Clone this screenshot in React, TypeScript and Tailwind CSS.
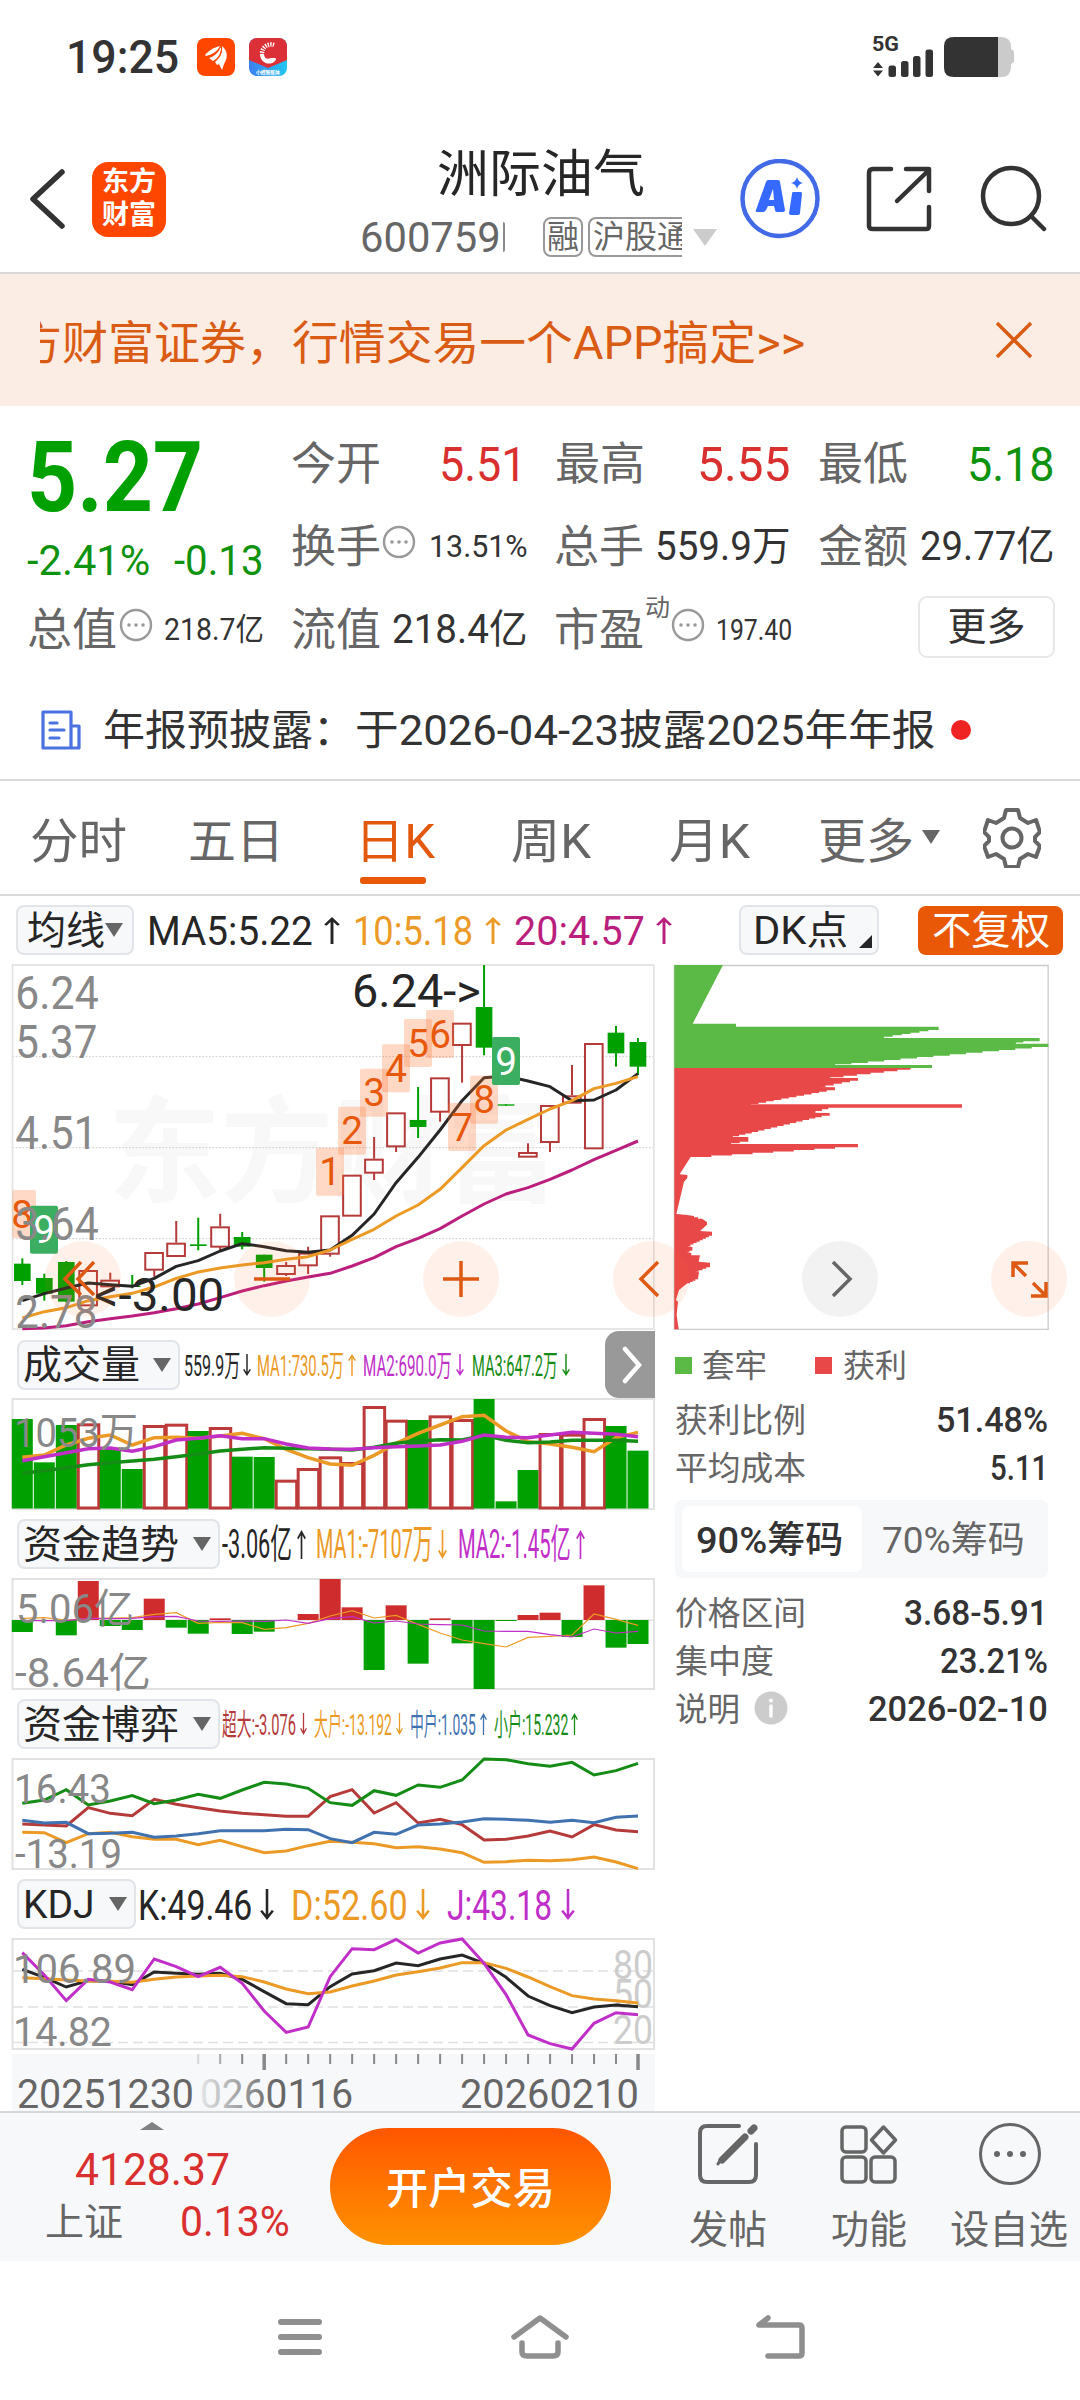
import React, { useLayoutEffect, useRef, useState } from 'react';

/* Single-line text squeezed or stretched to the width of its box. */
function Fit({ className = '', children }: { className?: string; children: React.ReactNode }) {
  const box = useRef<HTMLSpanElement>(null);
  const text = useRef<HTMLSpanElement>(null);
  const [scale, setScale] = useState(1);
  useLayoutEffect(() => {
    if (box.current && text.current) {
      setScale(box.current.clientWidth / text.current.offsetWidth);
    }
  }, []);
  return (
    <span ref={box} className={'flex shrink-0 items-center leading-none ' + className}>
      <span
        ref={text}
        className="relative top-[0.035em] inline-block origin-left whitespace-nowrap"
        style={{ transform: `scaleX(${scale})` }}
      >
        {children}
      </span>
    </span>
  );
}

const GREEN = '#00a000';
const RED = '#b53a3a';
const ORANGE = '#eb9a26';
const MAGENTA = '#bb1f7d';
const PURPLE = '#c02fc8';
const BLUE = '#3f72ae';
const DARK = '#262626';

const step = 21.99;
const dayX = (i: number) => 22.3 + step * i;

function Arrow({ up, className = '' }: { up?: boolean; className?: string }) {
  return (
    <svg viewBox="0 0 12 30" preserveAspectRatio="none" fill="none" stroke="currentColor" strokeWidth="2.2" className={'shrink-0 ' + className}>
      {up ? <path d="M6 30V2M1 9l5-7 5 7" /> : <path d="M6 0v28M1 21l5 7 5-7" />}
    </svg>
  );
}

function Caret({ className = '' }: { className?: string }) {
  return (
    <svg viewBox="0 0 18 14" className={'h-[14px] w-[18px] shrink-0 ' + className}>
      <path d="M0 0h18L9 14z" fill="currentColor" />
    </svg>
  );
}

function Dots({ className = '' }: { className?: string }) {
  return (
    <svg viewBox="0 0 34 34" className={'h-[34px] w-[34px] shrink-0 ' + className}>
      <circle cx="17" cy="17" r="15" fill="none" stroke="#999" strokeWidth="2.4" />
      <circle cx="10" cy="17" r="1.8" fill="#999" />
      <circle cx="17" cy="17" r="1.8" fill="#999" />
      <circle cx="24" cy="17" r="1.8" fill="#999" />
    </svg>
  );
}

function StatusBar() {
  return (
    <div className="flex h-[114px] items-center pl-[66px] text-[#333]">
      <Fit className="w-[113px] -translate-y-[2px] text-[47px] font-medium">19:25</Fit>
      <svg viewBox="0 0 38 38" className="ml-[18px] h-[38px] w-[38px]">
        <rect width="38" height="38" rx="8" fill="#ff4600" />
        <path d="M8 17C12 12 18 9 23 8c-2 5-8 9-14 10z" fill="#fff" />
        <path d="M12 20c6-2 10-6 12-12 1 6-2 12-8 15z" fill="#fff" />
        <path d="M18 24c5-4 8-9 7-16 6 5 6 12 2 18l-2 6-3-6-2 1z" fill="#fff" />
        <path d="M10 18.500c6-1.500 11-5 14-10.500M17 23.500c5-3.500 8-9 7.500-15" stroke="#ff4600" strokeWidth="1" fill="none" />
      </svg>
      <svg viewBox="0 0 38 38" className="ml-[14px] h-[38px] w-[38px]">
        <defs>
          <clipPath id="appClip"><rect width="38" height="38" rx="8" /></clipPath>
          <linearGradient id="appBlue" x1="0" x2="1"><stop offset="0" stopColor="#3d7ff0" /><stop offset="1" stopColor="#22c7f0" /></linearGradient>
        </defs>
        <g clipPath="url(#appClip)">
          <rect width="38" height="38" fill="url(#appBlue)" />
          <path d="M0 0h38v22L19 30 0 22z" fill="#dc3038" />
          <path d="M25 7a9 9 0 0 0-12 9" fill="none" stroke="#fff" strokeWidth="4.500" strokeDasharray="1.3 1.2" />
          <path d="M11 16h4c0 4 3 6 7 4h4c2 1 1 2-1 4-6 4-14 0-14-8z" fill="#fff" />
        </g>
        <text x="7" y="35.500" fontSize="5" fontWeight="700" fill="#fff" textLength="24">小蝶智能体</text>
      </svg>
      <svg viewBox="0 0 144 44" className="ml-[585px] h-[44px] w-[144px]">
        <text x="0" y="16" fontSize="21" fontWeight="700" fill="#333" textLength="27" lengthAdjust="spacingAndGlyphs">5G</text>
        <path d="M1 33l5-6 5 6zM1 35.500l5 6 5-6z" fill="#333" />
        <rect x="16.500" y="30.500" width="7.500" height="11.500" rx="2.500" fill="#333" />
        <rect x="29" y="26" width="7.500" height="16" rx="2.500" fill="#333" />
        <rect x="41" y="21" width="7.500" height="21" rx="2.500" fill="#333" />
        <rect x="53.500" y="14.500" width="7.500" height="27.500" rx="2.500" fill="#333" />
        <path d="M126 2h3q10 0 10 10v2l3 2v11l-3 2v3q0 10-10 10h-3z" fill="#cbcbcb" />
        <path d="M126 2H82Q72 2 72 11v22q0 9 10 9h44z" fill="#333" />
      </svg>
    </div>
  );
}

function Header() {
  return (
    <div className="flex h-[160px] items-center border-b-2 border-[#d9d9d9] pl-[29px] pt-[12px]">
      <svg viewBox="0 0 38 62" className="h-[62px] w-[38px]">
        <path d="M33 4L4 31l29 27" fill="none" stroke="#333" strokeWidth="5.500" strokeLinecap="round" strokeLinejoin="round" />
      </svg>
      <div className="ml-[25px] flex h-[75px] w-[74px] flex-col items-center justify-center gap-[6px] rounded-[16px] bg-[#ff4600] text-[27px] font-bold leading-[27px] text-white">
        <div className="h-[27px]">东方</div>
        <div className="h-[27px]">财富</div>
      </div>
      <div className="ml-[194px] flex h-[148px] w-[359px] flex-col">
        <Fit className="mt-[19px] ml-[77px] h-[58px] w-[208px] text-[51px] text-[#262626]">洲际油气</Fit>
        <div className="mt-[7px] flex h-[56px] items-center text-[#666]">
          <Fit className="w-[141px] text-[42px]">600759</Fit>
          <div className="ml-[2px] h-[30px] w-[2px] rounded-r-full bg-[#8a8a8a]" />
          <div className="ml-[38px] flex h-[40px] w-[40px] items-center justify-center rounded-[8px] border-2 border-[#999] text-[32px] leading-none">融</div>
          <div className="ml-[5px] flex h-[40px] w-[94px] items-center overflow-hidden rounded-l-[8px] border-2 border-r-0 border-[#999] pl-[3px] leading-none">
            <span className="whitespace-nowrap text-[32px]">沪股通</span>
          </div>
          <svg viewBox="0 0 24 17" className="ml-[11px] h-[17px] w-[24px]"><path d="M0 0h24L12 17z" fill="#ccc" /></svg>
        </div>
      </div>
      <svg viewBox="0 0 80 80" className="ml-[21px] h-[80px] w-[80px]">
        <circle cx="40" cy="39.500" r="37.500" fill="none" stroke="#426ae6" strokeWidth="4.500" />
        <path d="M28 21h10q2 0 2 2l5 28q0 2-2 2h-6q-2 0-2-2l-1-4h-6l-2 4q-1 2-3 2h-6q-2 0-1-2l10-28q1-2 2-2zM33 30l-4 11h5z" fill="#3669ff" fillRule="evenodd" />
        <path d="M53 33h8q1 0 1 2l-2 19q0 2-2 2h-7q-2 0-2-2l3-19q0-2 1-2zM57 18q1 5 6 6-5 1-6 6-1-5-6-6 5-1 6-6z" fill="#3669ff" />
      </svg>
      <svg viewBox="0 0 66 66" fill="none" stroke="#333" strokeWidth="4.500" strokeLinecap="round" strokeLinejoin="round" className="ml-[46px] h-[66px] w-[66px]">
        <path d="M25 3H7Q3 3 3 7v53q0 3 4 3h53q3 0 3-3V41M40 3h23v22M62 5L31 35" />
      </svg>
      <svg viewBox="0 0 68 68" fill="none" stroke="#333" strokeWidth="4.500" strokeLinecap="round" className="ml-[47px] h-[68px] w-[68px]">
        <circle cx="32" cy="31" r="28" />
        <path d="M52 51l13 13" />
      </svg>
    </div>
  );
}

function Banner() {
  return (
    <div className="flex h-[132px] items-center bg-[#fcede4] pl-[40px] text-[#da5c14]">
      <div className="flex h-[60px] w-[765px] translate-y-[1px] items-center justify-end overflow-hidden">
        <Fit className="w-[276px] text-[46px]">方财富证券，</Fit>
        <Fit className="w-[513px] text-[46px]">行情交易一个APP搞定&gt;&gt;</Fit>
      </div>
      <svg viewBox="0 0 36 36" fill="none" stroke="currentColor" strokeWidth="3.500" className="ml-[191px] h-[36px] w-[36px]">
        <path d="M1 1l34 34M35 1L1 35" />
      </svg>
    </div>
  );
}

function Quote() {
  const label = 'w-[90px] text-[45px] text-[#666]';
  return (
    <div className="h-[264px] pt-[15px]">
      <div className="flex h-[166px] pl-[27px] text-[#00a000]">
        <div className="w-[264px]">
          <Fit className="mb-[8px] h-[106px] w-[176px] text-[99px] font-bold">5.27</Fit>
          <div className="flex h-[50px] items-center text-[#0f930f]">
            <Fit className="w-[123px] text-[42px]">-2.41%</Fit>
            <Fit className="ml-[24px] w-[90px] text-[42px]">-0.13</Fit>
          </div>
        </div>
        <div>
          <div className="flex h-[83px] items-center">
            <Fit className={label}>今开</Fit>
            <Fit className="ml-[58px] w-[88px] text-[49px] text-[#d9302f]">5.51</Fit>
            <Fit className={label + ' ml-[28px]'}>最高</Fit>
            <Fit className="ml-[52px] w-[94px] text-[49px] text-[#d9302f]">5.55</Fit>
            <Fit className={label + ' ml-[27px]'}>最低</Fit>
            <Fit className="ml-[59px] w-[88px] text-[49px] text-[#0f930f]">5.18</Fit>
          </div>
          <div className="flex h-[83px] items-center text-[#333]">
            <Fit className={label}>换手</Fit>
            <Dots className="ml-[1px] translate-y-[-4px]" />
            <Fit className="ml-[13px] w-[99px] text-[31px]">13.51%</Fit>
            <Fit className={label + ' ml-[26px]'}>总手</Fit>
            <Fit className="ml-[11px] w-[135px] text-[40px]">559.9万</Fit>
            <Fit className={label + ' ml-[28px]'}>金额</Fit>
            <Fit className="ml-[12px] w-[134px] text-[40px]">29.77亿</Fit>
          </div>
        </div>
      </div>
      <div className="flex h-[83px] items-center pl-[27px] text-[#333]">
        <Fit className={label}>总值</Fit>
        <Dots className="ml-[2px] translate-y-[-4px]" />
        <Fit className="ml-[11px] w-[100px] text-[31px]">218.7亿</Fit>
        <Fit className={label + ' ml-[27px]'}>流值</Fit>
        <Fit className="ml-[11px] w-[135px] text-[40px]">218.4亿</Fit>
        <Fit className={label + ' ml-[27px]'}>市盈</Fit>
        <Fit className="ml-[1px] w-[25px] -translate-y-[21px] text-[24px] text-[#666]">动</Fit>
        <Dots className="ml-[1px] translate-y-[-4px]" />
        <Fit className="ml-[11px] w-[76px] text-[30px]">197.40</Fit>
        <div className="ml-[126px] flex h-[62px] w-[137px] -translate-y-[2px] items-center justify-center rounded-[9px] border-2 border-[#e8e8e8]">
          <Fit className="w-[78px] text-[39px]">更多</Fit>
        </div>
      </div>
    </div>
  );
}

function Notice() {
  return (
    <div className="flex h-[111px] items-center border-b-2 border-[#d9d9d9] pl-[41px] pt-[10px] text-[#333]">
      <svg viewBox="0 0 40 40" fill="none" stroke="#4a72e0" strokeWidth="3.200" strokeLinejoin="round" strokeLinecap="round" className="h-[40px] w-[40px]">
        <path d="M30 38H2V2h28zM30 16h8v22h-8M9 13h7M9 20h14M9 28h9" />
      </svg>
      <Fit className="ml-[22px] w-[252px] text-[42px]">年报预披露：</Fit>
      <Fit className="w-[580px] text-[42px]">于2026-04-23披露2025年年报</Fit>
      <div className="ml-[16px] h-[20px] w-[20px] rounded-full bg-[#f02323]" />
    </div>
  );
}

function Tabs() {
  return (
    <div className="flex h-[115px] items-center border-b-2 border-[#d9d9d9] pl-[30px] pt-[5px] text-[48px] text-[#666]">
      <Fit className="w-[97px]">分时</Fit>
      <Fit className="ml-[61px] w-[96px]">五日</Fit>
      <div className="relative ml-[71px] text-[#e2580d]">
        <Fit className="h-[80px] w-[80px]">日K</Fit>
        <div className="absolute left-[5px] top-[77px] h-[7px] w-[66px] rounded-[3px] bg-[#e85806]" />
      </div>
      <Fit className="ml-[76px] w-[80px]">周K</Fit>
      <Fit className="ml-[78px] w-[81px]">月K</Fit>
      <Fit className="ml-[68px] w-[96px]">更多</Fit>
      <Caret className="ml-[8px] -translate-y-[3px]" />
      <svg viewBox="0 0 58 60" fill="none" stroke="#666" strokeWidth="4" strokeLinejoin="round" className="ml-[43px] h-[60px] w-[58px] -translate-y-[2px]">
        <path d="M23 2h12l2 8 8 5 8-3 4 12-5 5v4l5 5-4 11-8-3-8 5-2 8H23l-2-8-8-5-8 3-4-11 5-5v-4l-5-5 4-12 8 3 8-5z" />
        <circle cx="29" cy="30" r="9.500" />
      </svg>
    </div>
  );
}

function AverageRow() {
  return (
    <div className="flex h-[64px] items-center pl-[16px] pt-[4px] text-[#262626]">
      <div className="flex h-[50px] w-[118px] items-center rounded-[8px] border-2 border-[#e1e4e8] bg-[#f7f8fa] pl-[9px]">
        <Fit className="w-[78px] text-[39px]">均线</Fit>
        <Caret className="text-[#666]" />
      </div>
      <Fit className="ml-[13px] w-[166px] text-[41px]">MA5:5.22</Fit>
      <Arrow up className="ml-[11px] h-[27px] w-[16px]" />
      <div className="ml-[13px] flex items-center text-[#eb9a26]">
        <Fit className="w-[120px] text-[41px]">10:5.18</Fit>
        <Arrow up className="ml-[12px] h-[27px] w-[16px]" />
      </div>
      <div className="ml-[13px] flex items-center text-[#bb1f7d]">
        <Fit className="w-[131px] text-[41px]">20:4.57</Fit>
        <Arrow up className="ml-[11px] h-[27px] w-[16px]" />
      </div>
      <div className="ml-[67px] flex h-[50px] w-[140px] items-center rounded-[8px] border-2 border-[#e1e4e8] bg-[#f7f8fa] pl-[12px]">
        <Fit className="w-[95px] text-[39px]">DK点</Fit>
        <svg viewBox="0 0 13 13" className="ml-[11px] mt-[22px] h-[13px] w-[13px]"><path d="M13 0v13H0z" fill="#262626" /></svg>
      </div>
      <div className="ml-[39px] flex h-[49px] w-[145px] items-center justify-center rounded-[8px] bg-[#e85806] text-white">
        <Fit className="w-[118px] text-[39px]">不复权</Fit>
      </div>
    </div>
  );
}

/* Candles: body top, body bottom, wick top, wick bottom, rising. Three units per pixel. */
const candles: [number, number, number, number, number][] = [
  [941, 993, 925, 1005, 0], [984, 1031, 971, 1052, 0], [936, 1055, 933, 1057, 0], [960, 1067, 960, 1067, 1],
  [989, 1010, 968, 1010, 1], [1007, 1011, 975, 1015, 0], [906, 960, 906, 980, 1], [878, 919, 813, 919, 1],
  [883, 888, 803, 901, 0], [829, 891, 791, 900, 1], [861, 890, 846, 898, 0], [914, 954, 914, 995, 0],
  [945, 973, 936, 978, 1], [908, 947, 890, 972, 1], [796, 912, 796, 920, 1], [674, 798, 674, 798, 1],
  [626, 669, 561, 690, 1], [487, 590, 487, 606, 1], [510, 531, 411, 564, 0], [382, 486, 382, 515, 1],
  [218, 286, 218, 398, 1], [171, 293, 45, 316, 0], [463, 467, 463, 467, 0], [606, 621, 580, 621, 1],
  [465, 577, 465, 606, 1], [436, 459, 345, 459, 1], [279, 596, 279, 596, 1], [248, 310, 228, 350, 0], [276, 350, 264, 375, 0],
];
const ma5 = [1052, 1031, 1014, 999, 1004, 1009, 985, 949, 932, 903, 881, 890, 902, 907, 900, 856, 792, 698, 622, 540, 452, 383, 378, 393, 410, 452, 450, 420, 371];
const ma10 = [1104, 1085, 1073, 1052, 1040, 1030, 1011, 985, 966, 954, 945, 938, 928, 920, 900, 868, 838, 798, 765, 718, 653, 587, 540, 508, 477, 452, 416, 400, 380];
const ma20 = [1136, 1134, 1127, 1115, 1106, 1098, 1088, 1076, 1062, 1043, 1023, 1007, 993, 981, 970, 948, 923, 890, 865, 836, 798, 762, 732, 713, 688, 660, 629, 601, 573];

const X3 = (i: number) => 67 + 65.96 * i;
const line3 = (v: number[]) => v.map((y, i) => `${X3(i)},${y}`).join(' ');

function Badge({ x, y, n, solid, left = 0 }: { x: number; y: number; n: string; solid?: boolean; left?: number }) {
  return (
    <g>
      <rect x={x + left} y={y} width={84 - left} height="144" rx="6" fill={solid ? '#3cae62' : '#ff7834'} fillOpacity={solid ? 1 : 0.28} />
      <text x={x + 42} y={y + 113} fontSize="116" fill={solid ? '#fff' : '#e8580c'} textAnchor="middle">{n}</text>
    </g>
  );
}

function PriceChart() {
  return (
    <svg viewBox="0 30 1980 1125" className="h-[375px] w-[660px] shrink-0">
      <text x="325" y="730" fontSize="345" fontWeight="700" fill="#f8f8f8" textLength="1350" lengthAdjust="spacingAndGlyphs">东方财富</text>
      <path d="M37 320H1962M37 593H1962M37 866H1962" stroke="#c9c9c9" strokeWidth="3" strokeDasharray="5 5" />
      <rect x="37.500" y="45" width="1924" height="1092" fill="none" stroke="#e2e2e2" strokeWidth="5" />
      {candles.map(([t, b, h, l, up], i) => (
        <g key={i} stroke={up ? RED : GREEN} strokeWidth="6" fill={up ? '#fff' : GREEN}>
          <path d={up ? `M${X3(i)} ${h}V${t}M${X3(i)} ${b}V${l}` : `M${X3(i)} ${h}V${l}`} />
          {up ? <rect x={X3(i) - 27} y={t + 3} width="53" height={Math.max(b - t - 4, 5)} /> : <rect x={X3(i) - 25} y={t} width="50" height={b - t} stroke="none" />}
        </g>
      ))}
      <g fill="none" strokeWidth="9" strokeLinejoin="round">
        <polyline points={line3(ma5)} stroke={DARK} />
        <polyline points={line3(ma10)} stroke={ORANGE} />
        <polyline points={line3(ma20)} stroke={MAGENTA} />
      </g>
      <Badge x={24} y={720} n="8" left={13} />
      <Badge x={90} y={767} n="9" solid />
      <Badge x={948} y={593} n="1" />
      <Badge x={1014} y={470} n="2" />
      <Badge x={1080} y={356} n="3" />
      <Badge x={1146} y={283} n="4" />
      <Badge x={1212} y={207} n="5" />
      <Badge x={1278} y={180} n="6" />
      <Badge x={1344} y={459} n="7" />
      <Badge x={1410} y={377} n="8" />
      <Badge x={1476} y={261} n="9" solid />
      <g fontSize="136" fill="#888">
        <text x="46" y="176" textLength="250" lengthAdjust="spacingAndGlyphs">6.24</text>
        <text x="46" y="325" textLength="246" lengthAdjust="spacingAndGlyphs">5.37</text>
        <text x="46" y="598" textLength="246" lengthAdjust="spacingAndGlyphs">4.51</text>
        <text x="46" y="871" textLength="250" lengthAdjust="spacingAndGlyphs">3.64</text>
        <text x="46" y="1133" textLength="246" lengthAdjust="spacingAndGlyphs">2.78</text>
      </g>
      <g fontSize="136" fill={DARK}>
        <text x="1056" y="170" textLength="386" lengthAdjust="spacingAndGlyphs">6.24-&gt;</text>
        <text x="283" y="1084" textLength="390" lengthAdjust="spacingAndGlyphs">&lt;-3.00</text>
      </g>
    </svg>
  );
}

/* Outline anchors as [y, x]; slopes are drawn as thin horizontal steps. */
const trapped: [number, number][] = [[45, 189], [221, 98], [221, 228], [230, 228], [230, 836], [240, 836], [240, 805], [264, 645], [264, 1139], [274, 1139], [274, 1090], [281, 1045], [281, 1165], [291, 1165], [291, 1115], [343, 525], [345, 525], [345, 816], [354, 816]];
const profit: [number, number][] = [[354, 753], [359, 750], [359, 712], [382, 510], [384, 510], [384, 594], [392, 594], [392, 570], [411, 472], [412, 525], [421, 525], [421, 500], [462, 273], [463, 273], [463, 906], [473, 906], [473, 505], [488, 447], [489, 509], [497, 509], [497, 485], [559, 218], [561, 218], [561, 265], [570, 265], [580, 213], [582, 213], [582, 594], [592, 594], [592, 525], [621, 92], [673, 59], [675, 82], [684, 82], [695, 72], [792, 49], [794, 75], [798, 102], [806, 126], [816, 141], [824, 141], [843, 120], [845, 156], [853, 156], [888, 82], [891, 97], [899, 97], [906, 80], [909, 94], [916, 94], [916, 120], [935, 116], [938, 150], [947, 150], [965, 105], [967, 117], [984, 114], [1000, 82], [1020, 57], [1050, 48], [1055, 54], [1095, 50], [1138, 56]];

function steppedPath(a: [number, number][]) {
  let d = `M43 ${a[0][0]}H${a[0][1]}`;
  for (let k = 1; k < a.length; k++) {
    const [y0, x0] = a[k - 1];
    const [y1, x1] = a[k];
    const n = Math.max(1, Math.round((y1 - y0) / 4.3));
    const steep = Math.abs(x1 - x0) > 1.5 * (y1 - y0) && y1 - y0 > 6;
    if (!steep) {
      d += `L${x1} ${y1}`;
    } else {
      for (let s = 1; s <= n; s++) d += `V${y0 + ((y1 - y0) * s) / n}H${x0 + ((x1 - x0) * s) / n}`;
    }
  }
  return d + 'H43Z';
}

function ChipChart() {
  return (
    <svg viewBox="0 30 1260 1125" className="h-[375px] w-[420px] shrink-0">
      <path d="M43 46.500H1164.500V1138H43z" fill="none" stroke="#ccc" strokeWidth="4" />
      <path d={steppedPath(trapped)} fill="#5bb946" />
      <path d={steppedPath(profit)} fill="#e84848" />
    </svg>
  );
}

function RoundButton({ className, children }: { className: string; children: React.ReactNode }) {
  return (
    <button className={'absolute top-[281px] h-[76px] w-[76px] rounded-full ' + className}>
      <svg viewBox="0 0 76 76" fill="none" stroke="currentColor" strokeWidth="3.500" className="h-[76px] w-[76px]">{children}</svg>
    </button>
  );
}

function ChartControls() {
  const warm = 'bg-[#ff7834]/10 text-[#de5a12] ';
  return (
    <>
      <RoundButton className={warm + 'left-[45px]'}><path d="M36 21L20 38l16 16M49 21L33 38l16 16" /></RoundButton>
      <RoundButton className={warm + 'left-[234px]'}><path d="M20 38h36" /></RoundButton>
      <RoundButton className={warm + 'left-[423px]'}><path d="M20 38h36M38 20v36" /></RoundButton>
      <RoundButton className={warm + 'left-[613px]'}><path d="M45 21L28 38l17 17" /></RoundButton>
      <RoundButton className="left-[802px] bg-[#f2f2f2] text-[#666]"><path d="M31 21l17 17-17 17" /></RoundButton>
      <RoundButton className={warm + 'left-[991px]'}><path d="M37 22H22v14M22 22l13 13M55 41v14H40M55 55L42 42" /></RoundButton>
    </>
  );
}

function Selector({ className, textClass, children }: { className: string; textClass: string; children: React.ReactNode }) {
  return (
    <div className={'flex h-[50px] shrink-0 items-center justify-between rounded-[8px] border-2 border-[#e1e4e8] bg-[#f7f8fa] pl-[4px] pr-[7px] text-[#262626] ' + className}>
      <Fit className={'text-[39px] ' + textClass}>{children}</Fit>
      <Caret className="text-[#666]" />
    </div>
  );
}

function Reading({ className, textClass, up, arrowClass, children }: { className: string; textClass: string; up?: boolean; arrowClass: string; children: React.ReactNode }) {
  return (
    <div className={'flex shrink-0 items-center ' + className}>
      <Fit className={textClass}>{children}</Fit>
      <Arrow up={up} className={arrowClass} />
    </div>
  );
}

function Panel({ children }: { children: React.ReactNode }) {
  return (
    <svg viewBox="0 0 660 120" className="h-[120px] w-[660px]">
      <rect x="12.500" y="5" width="641.500" height="110" fill="none" stroke="#e2e2e2" strokeWidth="2" />
      {children}
    </svg>
  );
}

function Series({ v, color, off, width = 3.5 }: { v: number[]; color: string; off: number; width?: number }) {
  return <polyline points={v.map((y, i) => `${dayX(i)},${(y - off) / 3 + 5}`).join(' ')} fill="none" stroke={color} strokeWidth={width} />;
}

function Label({ x, y, w, color = '#888', children }: { x: number; y: number; w: number; color?: string; children: React.ReactNode }) {
  return <text x={x} y={y} fontSize="41" fill={color} textLength={w} lengthAdjust="spacingAndGlyphs">{children}</text>;
}

const volume: [number, number][] = [[267, 0], [397, 0], [285, 0], [280, 1], [360, 0], [417, 0], [285, 1], [281, 1], [303, 0], [291, 1], [380, 0], [381, 0], [449, 1], [414, 1], [379, 1], [396, 1], [228, 1], [269, 1], [270, 0], [256, 1], [267, 1], [207, 0], [514, 0], [420, 0], [309, 1], [311, 1], [264, 1], [288, 0], [362, 0]];
const volMa1 = [382, 375, 345, 325, 315, 345, 323, 322, 325, 318, 310, 326, 358, 383, 402, 406, 376, 340, 310, 285, 260, 256, 303, 335, 342, 352, 365, 323, 307];
const volMa2 = [392, 380, 368, 356, 354, 364, 350, 330, 325, 317, 326, 326, 342, 354, 357, 358, 353, 350, 348, 345, 334, 315, 322, 323, 315, 307, 310, 313, 320];
const volMa3 = [430, 422, 413, 404, 398, 393, 388, 380, 372, 363, 358, 353, 355, 356, 358, 360, 352, 340, 333, 329, 330, 316, 331, 338, 336, 331, 331, 331, 334];

const flow: number[] = [906, 873, 916, 753, 888, 900, 806, 893, 911, 865, 912, 905, 870, 852, 747, 832, 1020, 826, 1001, 865, 940, 1077, 873, 855, 848, 921, 766, 953, 942];
const flowMa1 = [865, 863, 870, 866, 864, 863, 853, 848, 880, 877, 878, 898, 893, 880, 858, 842, 864, 856, 883, 909, 930, 941, 951, 922, 919, 915, 852, 868, 886];
const flowMa2 = [872, 872, 872, 865, 866, 865, 860, 859, 873, 874, 873, 874, 870, 880, 866, 860, 879, 873, 882, 884, 885, 903, 904, 904, 914, 921, 897, 909, 904];

const gameSmall = [340, 330, 299, 345, 333, 317, 341, 330, 313, 325, 300, 277, 282, 295, 338, 346, 302, 316, 285, 292, 270, 207, 209, 221, 229, 217, 255, 242, 220];
const gameSuper = [402, 405, 408, 353, 370, 377, 328, 343, 353, 363, 370, 374, 379, 379, 320, 299, 369, 338, 399, 388, 404, 450, 448, 438, 423, 441, 404, 420, 425];
const gameMid = [391, 399, 397, 431, 430, 427, 442, 438, 431, 422, 422, 422, 418, 419, 446, 458, 427, 433, 405, 402, 396, 386, 388, 391, 397, 391, 398, 382, 378];
const gameBig = [427, 428, 458, 431, 427, 440, 448, 448, 464, 451, 470, 488, 483, 467, 454, 457, 461, 473, 470, 477, 488, 517, 515, 511, 512, 509, 501, 516, 536];

const kdjJ = [788, 855, 932, 868, 876, 899, 807, 830, 860, 832, 880, 963, 1027, 1011, 860, 776, 779, 748, 789, 759, 747, 820, 914, 1035, 1061, 1077, 1000, 968, 974];
const kdjK = [838, 862, 891, 872, 874, 884, 846, 850, 853, 850, 868, 905, 941, 944, 890, 852, 842, 819, 827, 807, 795, 820, 862, 918, 947, 968, 951, 945, 950];
const kdjD = [863, 866, 870, 873, 874, 877, 868, 861, 858, 856, 860, 876, 897, 911, 906, 888, 873, 855, 845, 834, 818, 818, 835, 861, 890, 917, 927, 932, 939];

function Indicators() {
  return (
    <div className="w-[660px] shrink-0">
      <div className="relative flex h-[59px] items-center pl-[17px]">
        <Selector className="w-[163px]" textClass="w-[117px]">成交量</Selector>
        <Reading className="ml-[4px] text-[#262626]" textClass="w-[56px] text-[30px]" arrowClass="ml-[3px] h-[22px] w-[8px]">559.9万</Reading>
        <Reading up className="ml-[6px] text-[#eb9a26]" textClass="w-[87px] text-[30px]" arrowClass="ml-[4px] h-[22px] w-[8px]">MA1:730.5万</Reading>
        <Reading className="ml-[7px] text-[#c02fc8]" textClass="w-[89px] text-[30px]" arrowClass="ml-[4px] h-[22px] w-[8px]">MA2:690.0万</Reading>
        <Reading className="ml-[8px] text-[#158c15]" textClass="w-[86px] text-[30px]" arrowClass="ml-[4px] h-[22px] w-[8px]">MA3:647.2万</Reading>
        <button className="absolute left-[605px] top-[-4px] flex h-[67px] w-[50px] items-center justify-center rounded-l-[14px] bg-[#999] pl-[3px]">
          <svg viewBox="0 0 20 38" className="h-[38px] w-[20px]"><path d="M3 3l14 16L3 35" fill="none" stroke="#fff" strokeWidth="4.500" strokeLinecap="round" /></svg>
        </button>
      </div>
      <Panel>
        {volume.map(([t, up], i) => {
          const y = (t - 207) / 3 + 5;
          return up ? (
            <rect key={i} x={dayX(i) - 10} y={y + 1.500} width="20.500" height={114 - y - 1.500} fill="#fff" stroke="#bd3a3a" strokeWidth="3" />
          ) : (
            <rect key={i} x={dayX(i) - 10.500} y={y} width="21" height={114.500 - y} fill={GREEN} />
          );
        })}
        <Series v={volMa1} color={ORANGE} off={207} />
        <Series v={volMa3} color="#158c15" off={207} />
        <Series v={volMa2} color={PURPLE} off={207} />
        <Label x={14} y={53} w={124}>1053万</Label>
      </Panel>

      <div className="flex h-[60px] items-center pl-[17px]">
        <Selector className="w-[203px]" textClass="w-[156px]">资金趋势</Selector>
        <Reading up className="ml-[2px] text-[#262626]" textClass="w-[70px] text-[40px]" arrowClass="ml-[5px] h-[29px] w-[9px]">-3.06亿</Reading>
        <Reading className="ml-[10px] text-[#eb9a26]" textClass="w-[117px] text-[40px]" arrowClass="ml-[5px] h-[29px] w-[9px]">MA1:-7107万</Reading>
        <Reading up className="ml-[11px] text-[#c02fc8]" textClass="w-[113px] text-[40px]" arrowClass="ml-[5px] h-[29px] w-[9px]">MA2:-1.45亿</Reading>
      </div>
      <Panel>
        <path d="M12 46H654" stroke="#e2e2e2" strokeWidth="1.500" />
        {flow.map((v, i) => (
          <rect key={i} x={dayX(i) - 10.500} y={(Math.min(v, 870) - 747) / 3 + 5} width="21" height={Math.abs(v - 870) / 3} fill={v > 870 ? GREEN : '#cf2d2d'} />
        ))}
        <Series v={flowMa1} color={ORANGE} off={747} width={1.2} />
        <Series v={flowMa2} color={PURPLE} off={747} width={1.2} />
        <Label x={16} y={49} w={118}>5.06亿</Label>
        <Label x={15} y={113} w={136}>-8.64亿</Label>
      </Panel>

      <div className="flex h-[60px] items-center pl-[17px]">
        <Selector className="w-[203px]" textClass="w-[156px]">资金博弈</Selector>
        <Reading className="ml-[2px] text-[#b53a3a]" textClass="w-[74px] text-[30px]" arrowClass="ml-[4px] h-[22px] w-[7px]">超大:-3.076</Reading>
        <Reading className="ml-[7px] text-[#eb9a26]" textClass="w-[78px] text-[30px]" arrowClass="ml-[4px] h-[22px] w-[7px]">大户:-13.192</Reading>
        <Reading up className="ml-[7px] text-[#3f72ae]" textClass="w-[66px] text-[30px]" arrowClass="ml-[4px] h-[22px] w-[7px]">中户:1.035</Reading>
        <Reading up className="ml-[7px] text-[#158c15]" textClass="w-[74px] text-[30px]" arrowClass="ml-[3px] h-[22px] w-[7px]">小户:15.232</Reading>
      </div>
      <Panel>
        <Series v={gameBig} color={ORANGE} off={207} width={3} />
        <Series v={gameSuper} color={RED} off={207} width={3} />
        <Series v={gameMid} color={BLUE} off={207} width={3} />
        <Series v={gameSmall} color="#158c15" off={207} width={3} />
        <Label x={14} y={49} w={97}>16.43</Label>
        <Label x={15} y={114} w={107}>-13.19</Label>
      </Panel>

      <div className="flex h-[60px] items-center pl-[17px]">
        <Selector className="w-[119px]" textClass="w-[72px]">KDJ</Selector>
        <Reading className="ml-[2px] text-[#262626]" textClass="w-[114px] text-[43px]" arrowClass="ml-[8px] h-[31px] w-[14px]">K:49.46</Reading>
        <Reading className="ml-[17px] text-[#eb9a26]" textClass="w-[117px] text-[43px]" arrowClass="ml-[8px] h-[31px] w-[14px]">D:52.60</Reading>
        <Reading className="ml-[17px] text-[#c02fc8]" textClass="w-[105px] text-[43px]" arrowClass="ml-[9px] h-[31px] w-[14px]">J:43.18</Reading>
      </div>
      <Panel>
        <path d="M13 37H654M13 73H654M13 108.500H654" stroke="#e0e0e0" strokeWidth="1.500" strokeDasharray="10 5" />
        <Label x={613} y={45} w={40} color="#ccc">80</Label>
        <Label x={613} y={74} w={40} color="#ccc">50</Label>
        <Label x={613} y={110} w={40} color="#ccc">20</Label>
        <Series v={kdjK} color={DARK} off={747} width={3} />
        <Series v={kdjD} color={ORANGE} off={747} width={3} />
        <Series v={kdjJ} color={PURPLE} off={747} width={3} />
        <Label x={13} y={49} w={123}>106.89</Label>
        <Label x={13} y={112} w={99}>14.82</Label>
      </Panel>

      <svg viewBox="0 0 660 57" className="h-[57px] w-[660px]">
        <defs>
          <linearGradient id="dateFade" x1="196" x2="275" y1="0" y2="0" gradientUnits="userSpaceOnUse">
            <stop offset="0" stopColor="#666" stopOpacity="0.080" />
            <stop offset="1" stopColor="#666" />
          </linearGradient>
        </defs>
        <rect x="12" width="643" height="57" fill="#f7f8fa" />
        {Array.from({ length: 21 }, (_, k) => k + 8).map((i) => (
          <path key={i} d={`M${dayX(i)} 0V${i === 11 || i === 28 ? 16 : 10}`} stroke="#888" strokeWidth={i === 11 || i === 28 ? 3.500 : 2} strokeOpacity={i === 8 ? 0.3 : i === 9 ? 0.7 : 1} />
        ))}
        <Label x={17} y={54} w={177} color="#666">20251230</Label>
        <Label x={200} y={54} w={153} color="url(#dateFade)">0260116</Label>
        <Label x={460} y={54} w={179} color="#666">20260210</Label>
      </svg>
    </div>
  );
}

function InfoRow({ label, valueClass, value, labelClass, children }: { label: string; valueClass: string; value: string; labelClass: string; children?: React.ReactNode }) {
  return (
    <div className="flex h-[48px] items-center text-[33px]">
      <Fit className={'text-[#666] ' + labelClass}>{label}</Fit>
      {children}
      <Fit className={'ml-auto text-[35px] font-medium text-[#333] ' + valueClass}>{value}</Fit>
    </div>
  );
}

function ChipInfo() {
  return (
    <div className="w-[420px] pl-[15px] pr-[32px]">
      <div className="flex h-[60px] items-center text-[#666]">
        <div className="h-[17px] w-[17px] bg-[#5bb946]" />
        <Fit className="ml-[10px] w-[65px] text-[32px]">套牢</Fit>
        <div className="ml-[48px] h-[17px] w-[17px] bg-[#e84848]" />
        <Fit className="ml-[11px] w-[64px] text-[32px]">获利</Fit>
      </div>
      <InfoRow label="获利比例" labelClass="w-[131px]" value="51.48%" valueClass="w-[112px]" />
      <InfoRow label="平均成本" labelClass="w-[131px]" value="5.11" valueClass="w-[58px]" />
      <div className="mt-[9px] mb-[10px] flex h-[78px] items-center rounded-[7px] bg-[#f7f8fa] pl-[7px]">
        <div className="flex h-[66px] w-[180px] items-center justify-center rounded-[7px] bg-white pr-[5px]">
          <Fit className="w-[147px] text-[37px] font-medium text-[#333]">90%筹码</Fit>
        </div>
        <Fit className="ml-[20px] w-[143px] text-[37px] text-[#666]">70%筹码</Fit>
      </div>
      <InfoRow label="价格区间" labelClass="w-[131px]" value="3.68-5.91" valueClass="w-[144px]" />
      <InfoRow label="集中度" labelClass="w-[99px]" value="23.21%" valueClass="w-[108px]" />
      <InfoRow label="说明" labelClass="w-[65px]" value="2026-02-10" valueClass="w-[180px]">
        <svg viewBox="0 0 34 34" className="ml-[14px] h-[34px] w-[34px]">
          <circle cx="17" cy="17" r="16.500" fill="#ccc" />
          <path d="M17 15v10" stroke="#fff" strokeWidth="3.500" strokeLinecap="round" />
          <circle cx="17" cy="9.500" r="2" fill="#fff" />
        </svg>
      </InfoRow>
    </div>
  );
}

function BottomBar() {
  return (
    <div className="flex h-[150px] border-t-2 border-[#d5d8db] bg-[#f7f8fa] text-[#666]">
      <div className="ml-[45px] w-[245px]">
        <svg viewBox="0 0 24 8" className="ml-[95px] mt-[9px] h-[8px] w-[24px]"><path d="M0 8L12 0l12 8z" fill="#808080" /></svg>
        <Fit className="ml-[30px] mt-[14px] h-[48px] w-[155px] text-[44px] text-[#d9302f]">4128.37</Fit>
        <div className="mt-[4px] flex h-[50px] items-center">
          <Fit className="w-[78px] text-[38px]">上证</Fit>
          <Fit className="ml-[57px] w-[110px] text-[42px] text-[#d9302f]">0.13%</Fit>
        </div>
      </div>
      <button className="ml-[40px] mt-[15px] flex h-[117px] w-[281px] items-center justify-center rounded-full bg-linear-to-b from-[#ff5500] to-[#ff9100] text-white">
        <Fit className="mt-[3px] w-[169px] text-[43px] font-medium">开户交易</Fit>
      </button>
      <div className="ml-[77px] mt-[9px] flex w-[80px] flex-col items-center">
        <svg viewBox="0 0 62 64" fill="none" stroke="#666" strokeWidth="4" strokeLinecap="round" className="h-[64px] w-[62px]">
          <path d="M42 4H10q-7 0-7 7v42q0 7 7 7h42q7 0 7-7V22" />
          <path d="M25 38L48 15" strokeWidth="7" />
          <path d="M54 9l3-3" strokeWidth="7" />
          <path d="M21 42l3-5" strokeWidth="3" />
        </svg>
        <Fit className="mt-[23px] h-[40px] w-[78px] text-[39px]">发帖</Fit>
      </div>
      <div className="ml-[61px] mt-[9px] flex w-[80px] flex-col items-center">
        <svg viewBox="0 0 60 64" fill="none" stroke="#666" strokeWidth="3.500" strokeLinejoin="round" className="h-[64px] w-[60px]">
          <rect x="3" y="5" width="24" height="25" rx="4" />
          <rect x="3" y="35" width="24" height="25" rx="4" />
          <rect x="32" y="35" width="24" height="25" rx="4" />
          <path d="M44.500 5l12 13-12 13-12-13z" />
        </svg>
        <Fit className="mt-[23px] h-[40px] w-[76px] text-[39px]">功能</Fit>
      </div>
      <div className="ml-[40px] mt-[9px] flex w-[120px] flex-col items-center">
        <svg viewBox="0 0 64 64" className="h-[64px] w-[64px]">
          <circle cx="33" cy="32" r="29.500" fill="none" stroke="#666" strokeWidth="3" />
          <circle cx="20" cy="32" r="3" fill="#666" />
          <circle cx="33" cy="32" r="3" fill="#666" />
          <circle cx="46" cy="32" r="3" fill="#666" />
        </svg>
        <Fit className="mt-[23px] h-[40px] w-[118px] text-[39px]">设自选</Fit>
      </div>
    </div>
  );
}

function NavBar() {
  return (
    <div className="flex h-[139px] items-center pl-[277px] pt-[13px]">
      <svg viewBox="0 0 46 44" stroke="#8f8f8f" strokeWidth="6" strokeLinecap="round" className="h-[44px] w-[46px]"><path d="M4 7h38M4 22h38M4 37h38" /></svg>
      <svg viewBox="0 0 58 44" fill="none" stroke="#8f8f8f" strokeWidth="5.500" strokeLinecap="round" strokeLinejoin="round" className="ml-[188px] h-[44px] w-[58px]"><path d="M3 22L29 3l26 19" /><path d="M11 28v9q0 4 5 4h26q5 0 5-4v-9" /></svg>
      <svg viewBox="0 0 50 44" fill="none" stroke="#8f8f8f" strokeWidth="5.500" strokeLinecap="round" strokeLinejoin="round" className="ml-[186px] h-[44px] w-[50px]"><path d="M13 3L4 10h40q3 0 3 3v25q0 3-3 3H13" /></svg>
    </div>
  );
}

export default function App() {
  return (
    <div className="h-[2400px] w-[1080px] overflow-hidden bg-white font-[Roboto,'Noto_Sans_CJK_SC',sans-serif]">
      <StatusBar />
      <Header />
      <Banner />
      <Quote />
      <Notice />
      <Tabs />
      <AverageRow />
      <div className="relative flex h-[375px]">
        <PriceChart />
        <ChipChart />
        <ChartControls />
      </div>
      <div className="flex h-[776px]">
        <Indicators />
        <ChipInfo />
      </div>
      <BottomBar />
      <NavBar />
    </div>
  );
}
